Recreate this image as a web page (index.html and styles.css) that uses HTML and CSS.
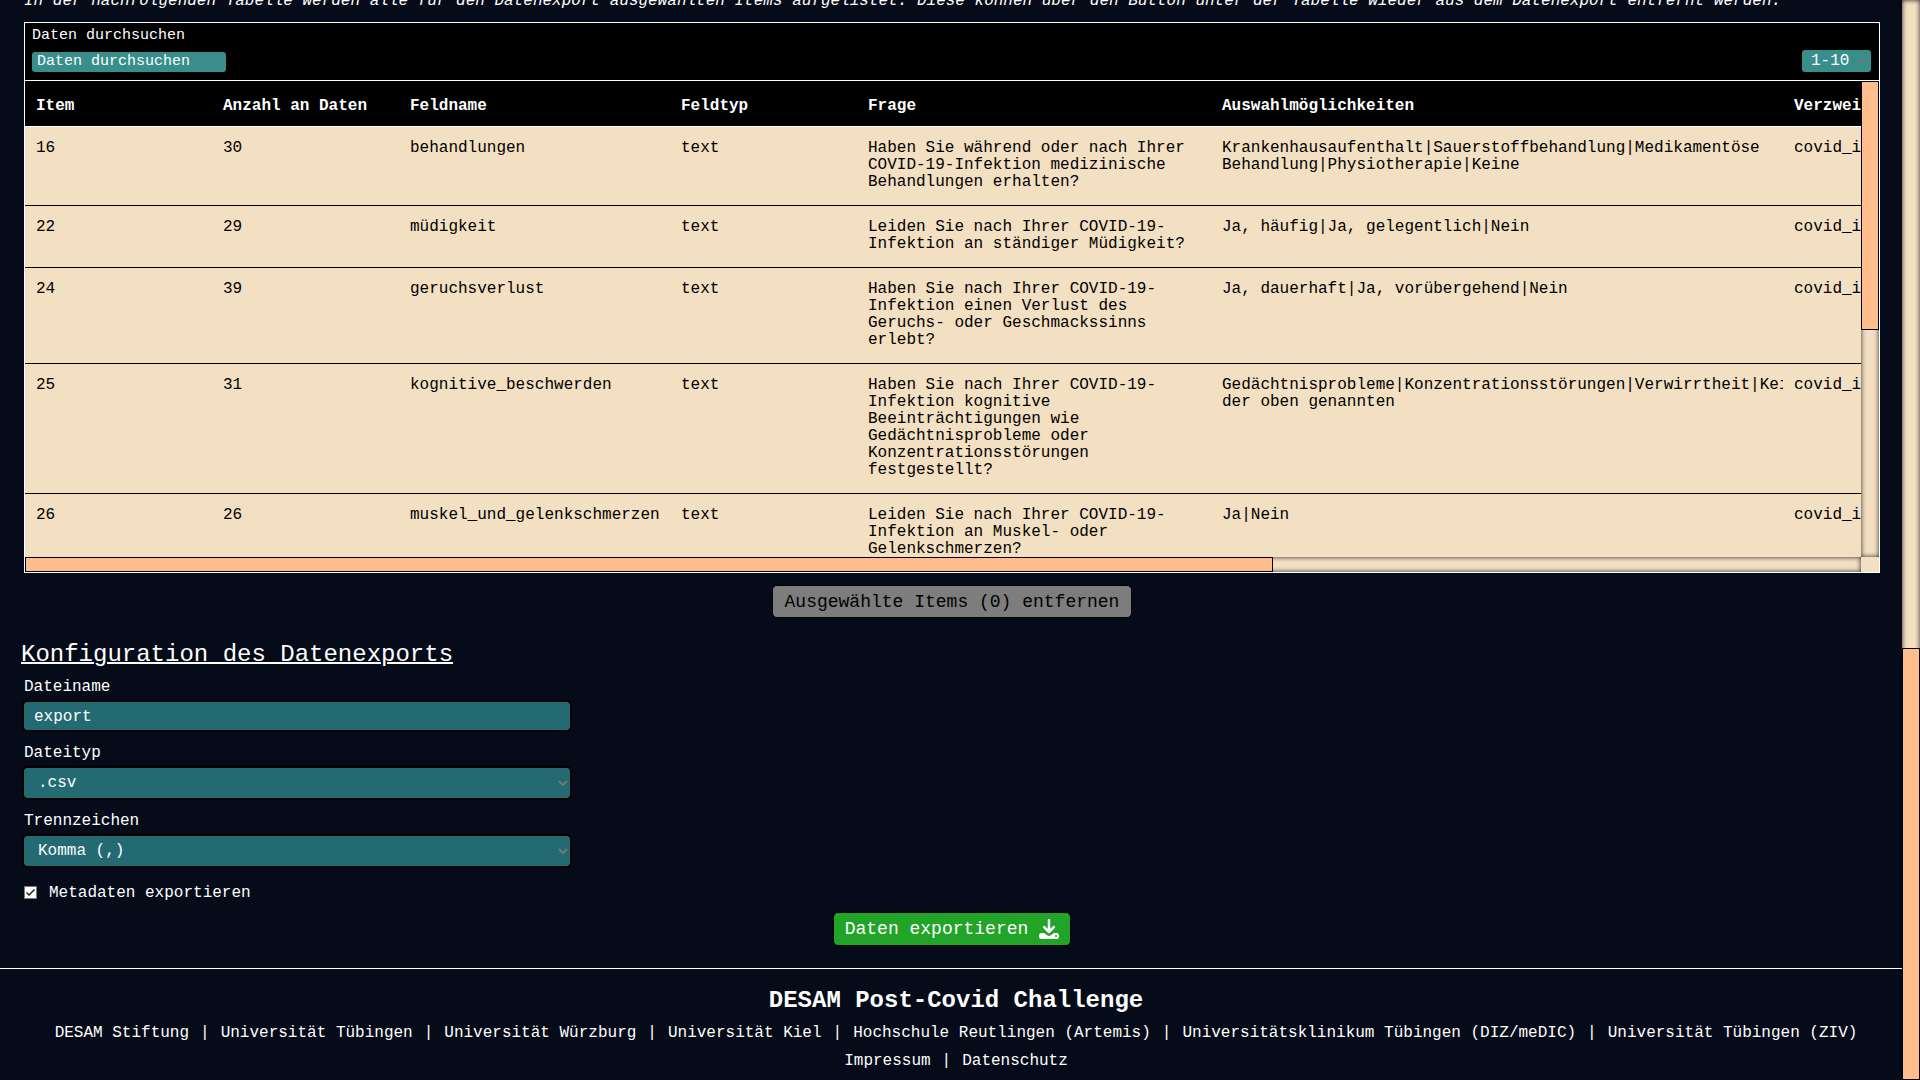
FILE: index.html
```html
<!DOCTYPE html>
<html lang="de">
<head>
<meta charset="utf-8">
<title>DESAM Post-Covid Challenge</title>
<link rel="stylesheet" href="styles.css">
</head>
<body>
<div class="page">
  <main class="main">
    <p class="intro">In der nachfolgenden Tabelle werden alle für den Datenexport ausgewählten Items aufgelistet. Diese können über den Button unter der Tabelle wieder aus dem Datenexport entfernt werden.</p>

    <section class="data-table">
      <div class="toolbar">
        <div class="search">
          <label for="search">Daten durchsuchen</label>
          <input class="search-input" id="search" type="text" placeholder="Daten durchsuchen">
        </div>
        <div class="select-box">
          <select class="range-select" aria-label="Einträge"><option>1-10</option></select>
          <svg class="chevron" viewBox="0 0 10 6"><path d="M1 1l4 4 4-4"/></svg>
        </div>
      </div>
      <div class="table-area">
        <div class="table-view">
          <table>
            <colgroup>
              <col class="col-short"><col class="col-short"><col class="col-name"><col class="col-short"><col class="col-question"><col class="col-options"><col class="col-branch">
            </colgroup>
            <thead>
              <tr><th>Item</th><th>Anzahl an Daten</th><th>Feldname</th><th>Feldtyp</th><th>Frage</th><th>Auswahlmöglichkeiten</th><th>Verzweigungslogik</th></tr>
            </thead>
            <tbody>
              <tr><td>16</td><td>30</td><td>behandlungen</td><td>text</td><td>Haben Sie während oder nach Ihrer COVID-19-Infektion medizinische Behandlungen erhalten?</td><td class="options">Krankenhausaufenthalt|Sauerstoffbehandlung|Medikamentöse<br>Behandlung|Physiotherapie|Keine</td><td>covid_infektion</td></tr>
              <tr><td>22</td><td>29</td><td>müdigkeit</td><td>text</td><td>Leiden Sie nach Ihrer COVID-19-Infektion an ständiger Müdigkeit?</td><td class="options">Ja, häufig|Ja, gelegentlich|Nein</td><td>covid_infektion</td></tr>
              <tr><td>24</td><td>39</td><td>geruchsverlust</td><td>text</td><td>Haben Sie nach Ihrer COVID-19-Infektion einen Verlust des Geruchs- oder Geschmackssinns erlebt?</td><td class="options">Ja, dauerhaft|Ja, vorübergehend|Nein</td><td>covid_infektion</td></tr>
              <tr><td>25</td><td>31</td><td>kognitive_beschwerden</td><td>text</td><td>Haben Sie nach Ihrer COVID-19-Infektion kognitive Beeinträchtigungen wie Gedächtnisprobleme oder Konzentrationsstörungen festgestellt?</td><td class="options">Gedächtnisprobleme|Konzentrationsstörungen|Verwirrtheit|Keine<br>der oben genannten</td><td>covid_infektion</td></tr>
              <tr><td>26</td><td>26</td><td>muskel_und_gelenkschmerzen</td><td>text</td><td>Leiden Sie nach Ihrer COVID-19-Infektion an Muskel- oder Gelenkschmerzen?</td><td class="options">Ja|Nein</td><td>covid_infektion</td></tr>
            </tbody>
          </table>
        </div>
        <div class="track"><div class="thumb" style="height:52.4%"></div></div>
        <div class="track"><div class="thumb" style="width:68%"></div></div>
        <div class="track-corner"></div>
      </div>
    </section>

    <button class="button button-remove" type="button" disabled>Ausgewählte Items (0) entfernen</button>

    <h2 class="heading">Konfiguration des Datenexports</h2>
    <form class="config">
      <div class="field">
        <label for="filename">Dateiname</label>
        <input class="control" id="filename" type="text" value="export">
      </div>
      <div class="field">
        <label for="filetype">Dateityp</label>
        <div class="select-box">
          <select class="control" id="filetype"><option>.csv</option></select>
          <svg class="chevron" viewBox="0 0 10 6"><path d="M1 1l4 4 4-4"/></svg>
        </div>
      </div>
      <div class="field">
        <label for="separator">Trennzeichen</label>
        <div class="select-box">
          <select class="control" id="separator"><option>Komma (,)</option></select>
          <svg class="chevron" viewBox="0 0 10 6"><path d="M1 1l4 4 4-4"/></svg>
        </div>
      </div>
    </form>
    <div class="check-row">
      <span class="check-box">
        <input id="metadata" type="checkbox" checked>
        <svg class="check-mark" viewBox="0 0 13 13"><path d="M2.500 6.500l2.500 2.500L10.500 3.500"/></svg>
      </span>
      <label for="metadata">Metadaten exportieren</label>
    </div>

    <button class="button button-export" type="button">Daten exportieren
      <svg class="download" viewBox="0 0 20 20"><path class="arrow" d="M10 1.200v11.300M5.200 8.200l4.800 4.800 4.800-4.800"/><path class="tray" d="M2.500 14h2.600l3 2.300q1.900 1.400 3.800 0l3-2.300h2.600a2.500 2.500 0 0 1 2.500 2.500v1a2.500 2.500 0 0 1-2.500 2.500h-15a2.500 2.500 0 0 1-2.500-2.500v-1a2.500 2.500 0 0 1 2.500-2.500z"/><circle class="dot" cx="17" cy="17" r="1"/></svg>
    </button>
  </main>

  <footer class="footer">
    <h2>DESAM Post-Covid Challenge</h2>
    <nav class="links">
      <a href="#">DESAM Stiftung</a><span>|</span><a href="#">Universität Tübingen</a><span>|</span><a href="#">Universität Würzburg</a><span>|</span><a href="#">Universität Kiel</a><span>|</span><a href="#">Hochschule Reutlingen (Artemis)</a><span>|</span><a href="#">Universitätsklinikum Tübingen (DIZ/meDIC)</a><span>|</span><a href="#">Universität Tübingen (ZIV)</a>
    </nav>
    <nav class="links">
      <a href="#">Impressum</a><span>|</span><a href="#">Datenschutz</a>
    </nav>
  </footer>
</div>
<div class="track page-track"><div class="thumb" style="height:40%"></div></div>
</body>
</html>
```

FILE: styles.css
```css
* { box-sizing: border-box; }

body {
  margin: 0;
  display: flex;
  height: 100vh;
  overflow: hidden;
  background: #050b18;
  color: #fff;
  font: 16px/20px "Liberation Mono", monospace;
}

input, select, button { font: inherit; color: inherit; }

/* The view rests at the end of the page, so content is aligned to the bottom. */
.page {
  flex: 1;
  min-width: 0;
  display: flex;
  flex-direction: column;
  justify-content: flex-end;
}

.main {
  display: flex;
  flex-direction: column;
  padding: 0 22px 22px 24px;
}

.intro { margin: 0 0 11px; font-style: italic; white-space: nowrap; }

/* Data table */
.data-table { border: 1px solid #fff; background: #000; }

.toolbar {
  display: flex;
  justify-content: space-between;
  align-items: flex-end;
  padding: 3px 8px 8px 7px;
  border-bottom: 1px solid #fff;
}

.search { display: flex; flex-direction: column; gap: 6px; font-size: 15px; }

.search-input, .range-select {
  background: #388e8a;
  border: 0;
  border-radius: 3px;
  appearance: none;
}
.search-input { width: 194px; height: 20px; padding: 0 5px; }
.search-input::placeholder { color: #fff; opacity: 1; }
.range-select { width: 69px; height: 22px; padding: 0 9px; }

.table-area {
  display: grid;
  grid-template-columns: minmax(0, 1fr) 18px;
  grid-template-rows: 476px 15px;
  background: #f3dfc1;
}

.table-view { overflow: hidden; color: #000; line-height: 17px; }

table { table-layout: fixed; width: 2700px; border-collapse: separate; border-spacing: 0; }
.col-short { width: 187px; }
.col-name { width: 271px; }
.col-question { width: 354px; }
.col-options { width: 572px; }

th, td {
  text-align: left;
  vertical-align: top;
  padding: 13px 11px 14px;
  border-bottom: 1px solid #000;
  overflow: hidden;
}
th {
  padding: 17px 11px 11px;
  background: #000;
  color: #fff;
  border-color: #fff;
}
.options { white-space: nowrap; }

/* Scroll bars */
.track { background: #f3dfc1; box-shadow: inset 0 0 5px #222; }
.track-corner { background: #f3dfc1; }
.thumb { width: 100%; height: 100%; background: #ffbc8c; border: 1px solid #000; }
.page-track { width: 18px; display: flex; align-items: flex-end; }

/* Buttons */
.button {
  align-self: center;
  display: flex;
  align-items: center;
  gap: 11px;
  border: 1px solid #000;
  border-radius: 5px;
  padding: 0 11px;
  font-size: 18px;
}
.button-remove { margin: 12px 0 21px; height: 33px; padding: 0 12px; background: #7d7d7d; color: #000; }
.button-export { margin-top: 9px; height: 34px; background: #21a428; }

.download { width: 20px; height: 20px; }
.arrow { fill: none; stroke: #fff; stroke-width: 2.5; stroke-linecap: round; stroke-linejoin: round; }
.tray { fill: #fff; }
.dot { fill: #21a428; }

/* Export settings */
.heading {
  align-self: flex-start;
  margin: 0 0 6px -3px;
  font-size: 24px;
  font-weight: 400;
  line-height: 32px;
  text-decoration: underline;
  text-decoration-thickness: 2px;
}

.config { display: flex; flex-direction: column; gap: 11px; width: 100%; max-width: 550px; margin-left: -2px; }
.field { display: flex; flex-direction: column; gap: 3px; }
.field label { padding-left: 2px; }

.control {
  width: 100%;
  height: 32px;
  padding: 2px 10px 0;
  background: #246a72;
  background-clip: padding-box;
  border: 2px solid #000;
  border-radius: 5px;
  appearance: none;
}
select.control { height: 34px; padding: 0 14px; }

.select-box { display: grid; align-items: center; }
.select-box > * { grid-area: 1 / 1; }
.chevron {
  width: 10px;
  height: 6px;
  justify-self: end;
  margin-right: 4px;
  fill: none;
  stroke: #767676;
  stroke-width: 2;
  pointer-events: none;
}

.check-row { display: flex; align-items: center; gap: 12px; margin-top: 15px; }
.check-box { display: grid; padding-bottom: 2px; }
.check-box > * { grid-area: 1 / 1; width: 13px; height: 13px; margin: 0; }
.check-box input { appearance: none; background: #fff; border: 1px solid #767676; }
.check-mark { fill: none; stroke: #222; stroke-width: 1.5; pointer-events: none; }

/* Footer */
.footer {
  display: flex;
  flex-direction: column;
  align-items: center;
  gap: 4px;
  padding: 16px 0 7px 10px;
  border-top: 1px solid #fff;
}
.footer h2 { margin: 0; font-size: 24px; line-height: 32px; }
.links { display: flex; gap: 11px; line-height: 24px; white-space: nowrap; }
.links a { color: inherit; text-decoration: none; }
```
